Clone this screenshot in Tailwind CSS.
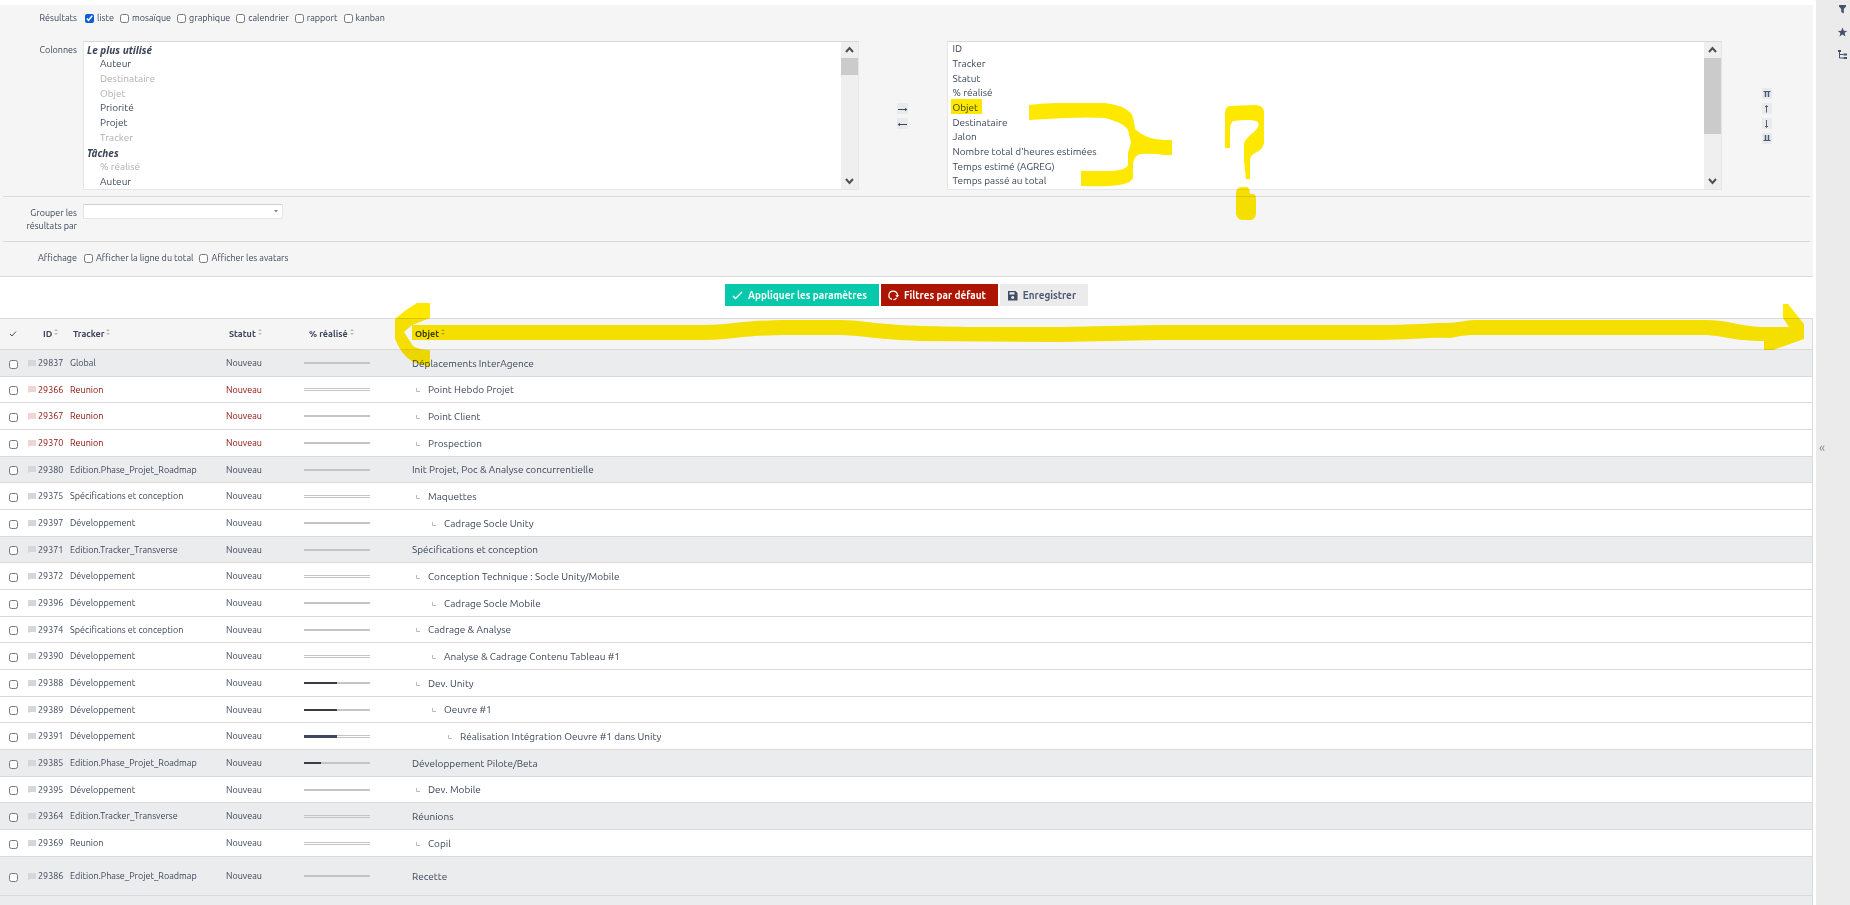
<!DOCTYPE html>
<html lang="fr">
<head>
<meta charset="utf-8">
<title>Tâches</title>
<script src="https://cdn.jsdelivr.net/npm/@tailwindcss/browser@4"></script>
</head>
<body class="relative flex h-screen overflow-hidden bg-white font-['Ubuntu','Roboto','Noto_Sans',sans-serif] text-[9px] leading-[14px] text-[#3c4559]">
<main class="min-w-0 flex-1 pt-[5px]">
  <form class="mr-[3px] border-b border-[#dadada] bg-[#f5f5f5]">
    <fieldset aria-label="Résultats" class="flex h-9 items-center pb-[10px]">
      <span class="w-[77px] text-right">Résultats</span>
      <div class="ml-2 flex gap-[6px]">
        <label class="flex items-center gap-[3px]"><input type="checkbox" checked class="size-[9px] accent-[#0a5cd8]">liste</label>
        <label class="flex items-center gap-[3px]"><input type="checkbox" class="size-[9px]">mosaïque</label>
        <label class="flex items-center gap-[3px]"><input type="checkbox" class="size-[9px]">graphique</label>
        <label class="flex items-center gap-[3px]"><input type="checkbox" class="size-[9px]">calendrier</label>
        <label class="flex items-center gap-[3px]"><input type="checkbox" class="size-[9px]">rapport</label>
        <label class="flex items-center gap-[3px]"><input type="checkbox" class="size-[9px]">kanban</label>
      </div>
    </fieldset>

    <div class="flex h-[155px]">
      <label for="available" class="mr-[6px] w-[77px] pt-[2px] text-right">Colonnes</label>
      <div class="flex h-[149px] min-w-0 flex-1 border border-[#e6e6e6] border-t-[#d8d8d8] bg-white">
        <select id="available" multiple size="10" class="h-full min-w-0 flex-1 overflow-hidden pt-[1px] text-[10px] leading-[14px] text-[#3c4559] [scrollbar-width:none] [&_option]:h-[15px] [&_option]:min-h-0 [&_option]:p-0 [&_option]:pl-[15px] [&_option:nth-child(3n)]:h-[14px] [&_option:disabled]:text-[#b0b0b0]">
          <optgroup label="Le plus utilisé" class="pl-[1px] font-['Noto_Sans'] italic [&>option]:font-['Ubuntu','Roboto'] [&>option]:not-italic">
            <option>Auteur</option>
            <option disabled>Destinataire</option>
            <option disabled>Objet</option>
            <option>Priorité</option>
            <option>Projet</option>
            <option disabled>Tracker</option>
          </optgroup>
          <optgroup label="Tâches" class="pl-[1px] font-['Noto_Sans'] italic [&>option]:font-['Ubuntu','Roboto'] [&>option]:not-italic">
            <option disabled>% réalisé</option>
            <option>Auteur</option>
          </optgroup>
        </select>
        <div class="flex w-[17px] flex-col items-center bg-[#efefef]" aria-hidden="true">
          <svg class="h-4 w-[17px]" viewBox="0 0 17 16"><path d="M5 10l3.500-4 3.500 4" fill="none" stroke="#505050" stroke-width="2"/></svg>
          <div class="h-[17px] w-full bg-[#cbcbcb]"></div>
          <svg class="mt-auto h-4 w-[17px]" viewBox="0 0 17 16"><path d="M5 6l3.500 4 3.500-4" fill="none" stroke="#505050" stroke-width="2"/></svg>
        </div>
      </div>
      <div class="flex w-[88px] flex-col items-center gap-1 pt-[62px]">
        <button type="button" aria-label="Ajouter" class="grid h-[11px] w-[11px] place-items-center bg-[#e9eaec]"><svg class="h-[11px] w-[11px]" viewBox="0 0 11 11"><path d="M1 6.500h8" stroke="#3c4559"/><path d="M8 4.800l2.300 1.700L8 8.200z" fill="#3c4559"/></svg></button>
        <button type="button" aria-label="Retirer" class="grid h-[11px] w-[11px] place-items-center bg-[#e9eaec]"><svg class="h-[11px] w-[11px]" viewBox="0 0 11 11"><path d="M2 6.500h8" stroke="#3c4559"/><path d="M3 4.800L.7 6.500 3 8.200z" fill="#3c4559"/></svg></button>
      </div>
      <div class="flex h-[149px] min-w-0 flex-1 border border-[#e6e6e6] border-t-[#d8d8d8] bg-white">
        <select id="selected" aria-label="Colonnes sélectionnées" multiple size="10" class="h-full min-w-0 flex-1 overflow-hidden pt-[1px] text-[10px] leading-[14px] text-[#3c4559] [scrollbar-width:none] [&_option]:h-[15px] [&_option]:min-h-0 [&_option]:p-0 [&_option]:pl-[5px] [&_option:nth-child(3n)]:h-[14px]">
          <option>ID</option><option>Tracker</option><option>Statut</option><option>% réalisé</option><option>Objet</option><option>Destinataire</option><option>Jalon</option><option>Nombre total d'heures estimées</option><option>Temps estimé (AGREG)</option><option>Temps passé au total</option>
        </select>
        <div class="flex w-[17px] flex-col items-center bg-[#efefef]" aria-hidden="true">
          <svg class="h-4 w-[17px]" viewBox="0 0 17 16"><path d="M5 10l3.500-4 3.500 4" fill="none" stroke="#505050" stroke-width="2"/></svg>
          <div class="h-[76px] w-full bg-[#cbcbcb]"></div>
          <svg class="mt-auto h-4 w-[17px]" viewBox="0 0 17 16"><path d="M5 6l3.500 4 3.500-4" fill="none" stroke="#505050" stroke-width="2"/></svg>
        </div>
      </div>
      <div class="flex w-[91px] flex-col items-center gap-1 pt-[47px] pr-[2px]">
        <button type="button" aria-label="Tout en haut" class="h-[11px] w-[10px] bg-[#e9eaec]"><svg viewBox="0 0 10 11"><path d="M3.500 9V3M6.500 9V3" stroke="#4a5a7c" stroke-width="1.500"/><path d="M1.500 3.500h7" stroke="#4a5a7c"/></svg></button>
        <button type="button" aria-label="Monter" class="h-[11px] w-[10px] bg-[#e9eaec]"><svg viewBox="0 0 10 11"><path d="M4.500 9.500V3M3 4l1.500-1.500L6 4" fill="none" stroke="#555d6e"/></svg></button>
        <button type="button" aria-label="Descendre" class="h-[11px] w-[10px] bg-[#e9eaec]"><svg viewBox="0 0 10 11"><path d="M4.500 2v7M3 8l1.500 1.500L6 8" fill="none" stroke="#555d6e"/></svg></button>
        <button type="button" aria-label="Tout en bas" class="h-[11px] w-[10px] bg-[#e9eaec]"><svg viewBox="0 0 10 11"><path d="M3.500 2v6M6.500 2v6" stroke="#4a5a7c" stroke-width="1.500"/><path d="M1.500 7.500h7" stroke="#4a5a7c"/></svg></button>
      </div>
    </div>

    <div class="mx-[3px] flex h-[46px] border-y border-[#dadada] pt-[7px]">
      <label for="group" class="mr-[6px] w-[74px] pt-[3px] pl-4 text-right leading-[13px]">Grouper les résultats par</label>
      <div class="relative h-[15px] w-[200px]">
        <select id="group" class="h-full w-full appearance-none border border-[#e6e6e6] border-t-[#cfcfcf] bg-white"><option></option></select>
        <svg class="pointer-events-none absolute top-[6px] right-[5px] h-[3px] w-1" viewBox="0 0 4 3"><path d="M0 0h4l-2 2.500z" fill="#888"/></svg>
      </div>
    </div>

    <fieldset aria-label="Affichage" class="flex h-[34px] items-center pb-[2px]">
      <span class="mr-[7px] w-[77px] text-right">Affichage</span>
      <label class="flex items-center gap-[3px]"><input type="checkbox" class="size-[9px]">Afficher la ligne du total</label>
      <label class="ml-[6px] flex items-center gap-[3px]"><input type="checkbox" class="size-[9px]">Afficher les avatars</label>
    </fieldset>
  </form>

  <div class="mr-[3px] flex h-[41px] items-start justify-center gap-[2px] pt-[7px] text-[10px] font-bold">
    <button type="button" class="flex h-[22px] items-center gap-[5px] bg-[#06c8ab] pt-px pr-3 pl-[7px] text-white"><svg class="size-[11px]" viewBox="0 0 11 11"><path d="M1 6l2.500 2.500L10 2" fill="none" stroke="#fff" stroke-width="1.300"/></svg>Appliquer les paramètres</button>
    <button type="button" class="flex h-[22px] items-center gap-[5px] bg-[#ad1500] pt-px pr-3 pl-[7px] text-white"><svg class="size-[11px]" viewBox="0 0 11 11"><path d="M4 9.400A4.200 4.200 0 1 1 9.300 5.800M5.400 9.700A4.200 4.200 0 0 0 8.600 7.800" fill="none" stroke="#fff" stroke-width="1.200"/><path d="M7.200 5.200h4L9.200 7.400z" fill="#fff"/></svg>Filtres par défaut</button>
    <button type="button" class="flex h-[22px] items-center gap-[5px] bg-[#ebebeb] pt-px pr-3 pl-[7px] text-[#4f5a72]"><svg class="size-[11px]" viewBox="0 0 11 11"><path d="M1 1h7.500L10.500 3v7.500H1zM2.500 2.200v2.300h5V2.200zM5.700 6a1.500 1.500 0 1 0 .01 0z" fill="#414c66" fill-rule="evenodd"/></svg>Enregistrer</button>
  </div>

  <table class="w-[calc(100%-3px)] table-fixed border-collapse border-t border-r border-[#dadada]">
    <colgroup><col class="w-[26px]"><col class="w-[44px]"><col class="w-[156px]"><col class="w-[78px]"><col class="w-[108px]"><col></colgroup>
    <thead>
      <tr class="h-[31px] border-b border-[#dadada] bg-[#f5f5f5] text-left [&_svg]:ml-[2px] [&_svg]:mb-[6px] [&_svg]:inline [&_svg]:h-[6px] [&_svg]:w-1">
        <th aria-label="Sélection" class="p-0 pl-2"><svg class="m-0! block! size-[10px]!" viewBox="0 0 10 10"><path d="M2 5l2 2L8 2.500" fill="none" stroke="#4a5368"/></svg></th>
        <th class="p-0 pl-[17px]">ID<svg viewBox="0 0 4 6"><path d="M0 2l2-2 2 2zM0 4l2 2 2-2z" fill="#bbb"/></svg></th>
        <th class="p-0 pl-[3px]">Tracker<svg viewBox="0 0 4 6"><path d="M0 2l2-2 2 2zM0 4l2 2 2-2z" fill="#bbb"/></svg></th>
        <th class="p-0 pl-[3px]">Statut<svg viewBox="0 0 4 6"><path d="M0 2l2-2 2 2zM0 4l2 2 2-2z" fill="#bbb"/></svg></th>
        <th class="p-0 pl-[5px]">% réalisé<svg viewBox="0 0 4 6"><path d="M0 2l2-2 2 2zM0 4l2 2 2-2z" fill="#bbb"/></svg></th>
        <th class="p-0 pl-[3px]">Objet<svg viewBox="0 0 4 6"><path d="M0 2l2-2 2 2zM0 4l2 2 2-2z" fill="#bbb"/></svg></th>
      </tr>
    </thead>
    <tbody id="rows"></tbody>
  </table>
</main>

<aside class="relative w-[34px] shrink-0 bg-[#ebebeb]">
  <nav class="flex flex-col items-end gap-3 pt-1 pr-[2px]">
    <button type="button" aria-label="Filtres" class="size-[11px]"><svg viewBox="0 0 11 11"><path d="M2 1h7v1.500L6.800 5v4.500L4.200 8V5L2 2.500z" fill="#46526c"/></svg></button>
    <button type="button" aria-label="Favoris" class="size-[11px]"><svg viewBox="0 0 11 11"><path d="M5.500.5l1.300 3.200 3.400.2-2.600 2.200.9 3.500-3-2-3 2 .9-3.500L.8 3.900 4.200 3.700z" fill="#46526c"/></svg></button>
    <button type="button" aria-label="Arborescence" class="size-[11px]"><svg viewBox="0 0 11 11"><path d="M1 0h3v2H1zM6.500 3.500h3.500v2H6.500zM6.500 7h3.500v2H6.500z" fill="#46526c"/><path d="M2.500 1v7h4M2.500 4.500h4" fill="none" stroke="#46526c"/></svg></button>
  </nav>
  <button type="button" aria-label="Déplier" class="absolute top-[440px] left-[3px] text-[13px] leading-[14px] text-[#888]">«</button>
</aside>

<!-- Highlighter annotations laid over the page -->
<svg class="pointer-events-none absolute top-0 left-0 h-[905px] w-[1850px] mix-blend-multiply" viewBox="0 0 1850 905" fill="#ffe800" aria-hidden="true">
  <path d="M951 99h31v15h-31z"/>
  <path d="M1029 105Q1045 103 1057 103H1105Q1123 105 1131 113Q1134 118 1135 129Q1147 140 1164 140H1172V155H1164Q1152 153 1140 154Q1133 157 1133 165V178Q1132 183 1119 185Q1105 187 1081 186V171H1110Q1128 170 1128 164V153L1131 143L1128 130Q1124 123 1105 118Q1090 117 1065 118L1029 120z"/>
  <path d="M1225 148V112Q1226 106 1230 106L1255 105Q1264 105 1264 112V143Q1263 150 1255 153Q1250 156 1250 160V179H1246L1244 160V143Q1246 138 1254 132Q1262 124 1256 121Q1250 119 1233 121Q1230 124 1230 130V148z"/>
  <path d="M1236 192Q1237 187 1242 187H1247Q1250 188 1250 194H1254Q1256 195 1256 198V214Q1255 220 1250 220H1242Q1237 219 1236 214z"/>
  <path d="M430 303H417Q405 310 395 319V339Q402 356 413 362L430 367V350Q419 350 413 346L404 332L412 325V340H700C735 340 740 335 790 335H840C870 336 870 339 920 341L1060 342L1160 340H1380C1410 340 1430 337 1450 338C1465 335 1470 335 1475 335H1707C1730 337 1735 341 1764 341V350H1773L1804 339V324L1788 304H1783V318L1789 327L1767 327C1740 327 1735 321 1707 320H1475C1465 320 1460 323 1445 323C1430 323 1410 325 1380 325H1160L1060 327H967C930 326 910 326 887 324C870 323 860 320 840 320H790C740 320 735 325 700 325H412L430 318z"/>
</svg>

<script>
const rows = [
  [29837, 'Global', 0, 's', 0, 'Déplacements InterAgence'],
  [29366, 'Reunion', 1, 'd', 0, 'Point Hebdo Projet', 1],
  [29367, 'Reunion', 1, 's', 0, 'Point Client', 1],
  [29370, 'Reunion', 1, 's', 0, 'Prospection', 1],
  [29380, 'Edition.Phase_Projet_Roadmap', 0, 's', 0, 'Init Projet, Poc & Analyse concurrentielle'],
  [29375, 'Spécifications et conception', 1, 'd', 0, 'Maquettes'],
  [29397, 'Développement', 2, 's', 0, 'Cadrage Socle Unity'],
  [29371, 'Edition.Tracker_Transverse', 0, 's', 0, 'Spécifications et conception'],
  [29372, 'Développement', 1, 'd', 0, 'Conception Technique : Socle Unity/Mobile'],
  [29396, 'Développement', 2, 's', 0, 'Cadrage Socle Mobile'],
  [29374, 'Spécifications et conception', 1, 's', 0, 'Cadrage & Analyse'],
  [29390, 'Développement', 2, 'd', 0, 'Analyse & Cadrage Contenu Tableau #1'],
  [29388, 'Développement', 1, 's', 50, 'Dev. Unity'],
  [29389, 'Développement', 2, 's', 50, 'Oeuvre #1'],
  [29391, 'Développement', 3, 'd', 50, 'Réalisation Intégration Oeuvre #1 dans Unity'],
  [29385, 'Edition.Phase_Projet_Roadmap', 0, 's', 25, 'Développement Pilote/Beta'],
  [29395, 'Développement', 1, 's', 0, 'Dev. Mobile'],
  [29364, 'Edition.Tracker_Transverse', 0, 'd', 0, 'Réunions'],
  [29369, 'Reunion', 1, 'd', 0, 'Copil'],
  [29386, 'Edition.Phase_Projet_Roadmap', 0, 's', 0, 'Recette'],
];
const indent = ['', 'pl-1', 'pl-5', 'pl-9'];
const esc = s => s.replace(/&/g, '&amp;');
const html = rows.map(([id, tracker, level, kind, done, subject, late], i) => {
  const height = i === 19 ? 'h-[39px]' : i % 3 === 1 ? 'h-[26px]' : 'h-[27px]';
  const bar = kind === 'd'
    ? `<div class="h-[3px] w-[66px] border-y border-[#c4c4c4]"><div class="-mt-px h-[3px] bg-[#3d475d]" style="width:${done}%"></div></div>`
    : `<div class="h-[2px] w-[66px] bg-[#c4c4c4]"><div class="h-full bg-[#3a3a48]" style="width:${done}%"></div></div>`;
  return `<tr class="${height} border-b border-[#dadada] ${level ? 'bg-white' : 'bg-[#ebecee]'} ${late ? 'text-[#8a0a00]' : ''}">
    <td class="p-0 pl-[9px]"><input type="checkbox" aria-label="${id}" class="mt-[2px] block size-[9px]"></td>
    <td class="p-0"><div class="flex items-center gap-[2px] pl-[2px]"><svg class="h-[7px] w-2" viewBox="0 0 8 7"><path d="M0 0h8v6H2L0 7z" fill="${late ? '#f0d5d5' : '#d5d7db'}"/></svg>${id}</div></td>
    <td class="p-0 whitespace-nowrap">${tracker}</td>
    <td class="p-0">Nouveau</td>
    <td class="p-0">${bar}</td>
    <td class="p-0 text-[10px] text-[#3c4559]"><div class="flex items-center gap-2 pt-px ${indent[level]}">${level ? '<svg class="h-1 w-1" viewBox="0 0 4 4"><path d="M.5 0v3.500H4" fill="none" stroke="#b5b9c0"/></svg>' : ''}${esc(subject)}</div></td>
  </tr>`;
}).join('');
document.getElementById('rows').innerHTML = html + '<tr class="h-[27px] bg-[#ebecee]"><td colspan="6"></td></tr>';
</script>
</body>
</html>
